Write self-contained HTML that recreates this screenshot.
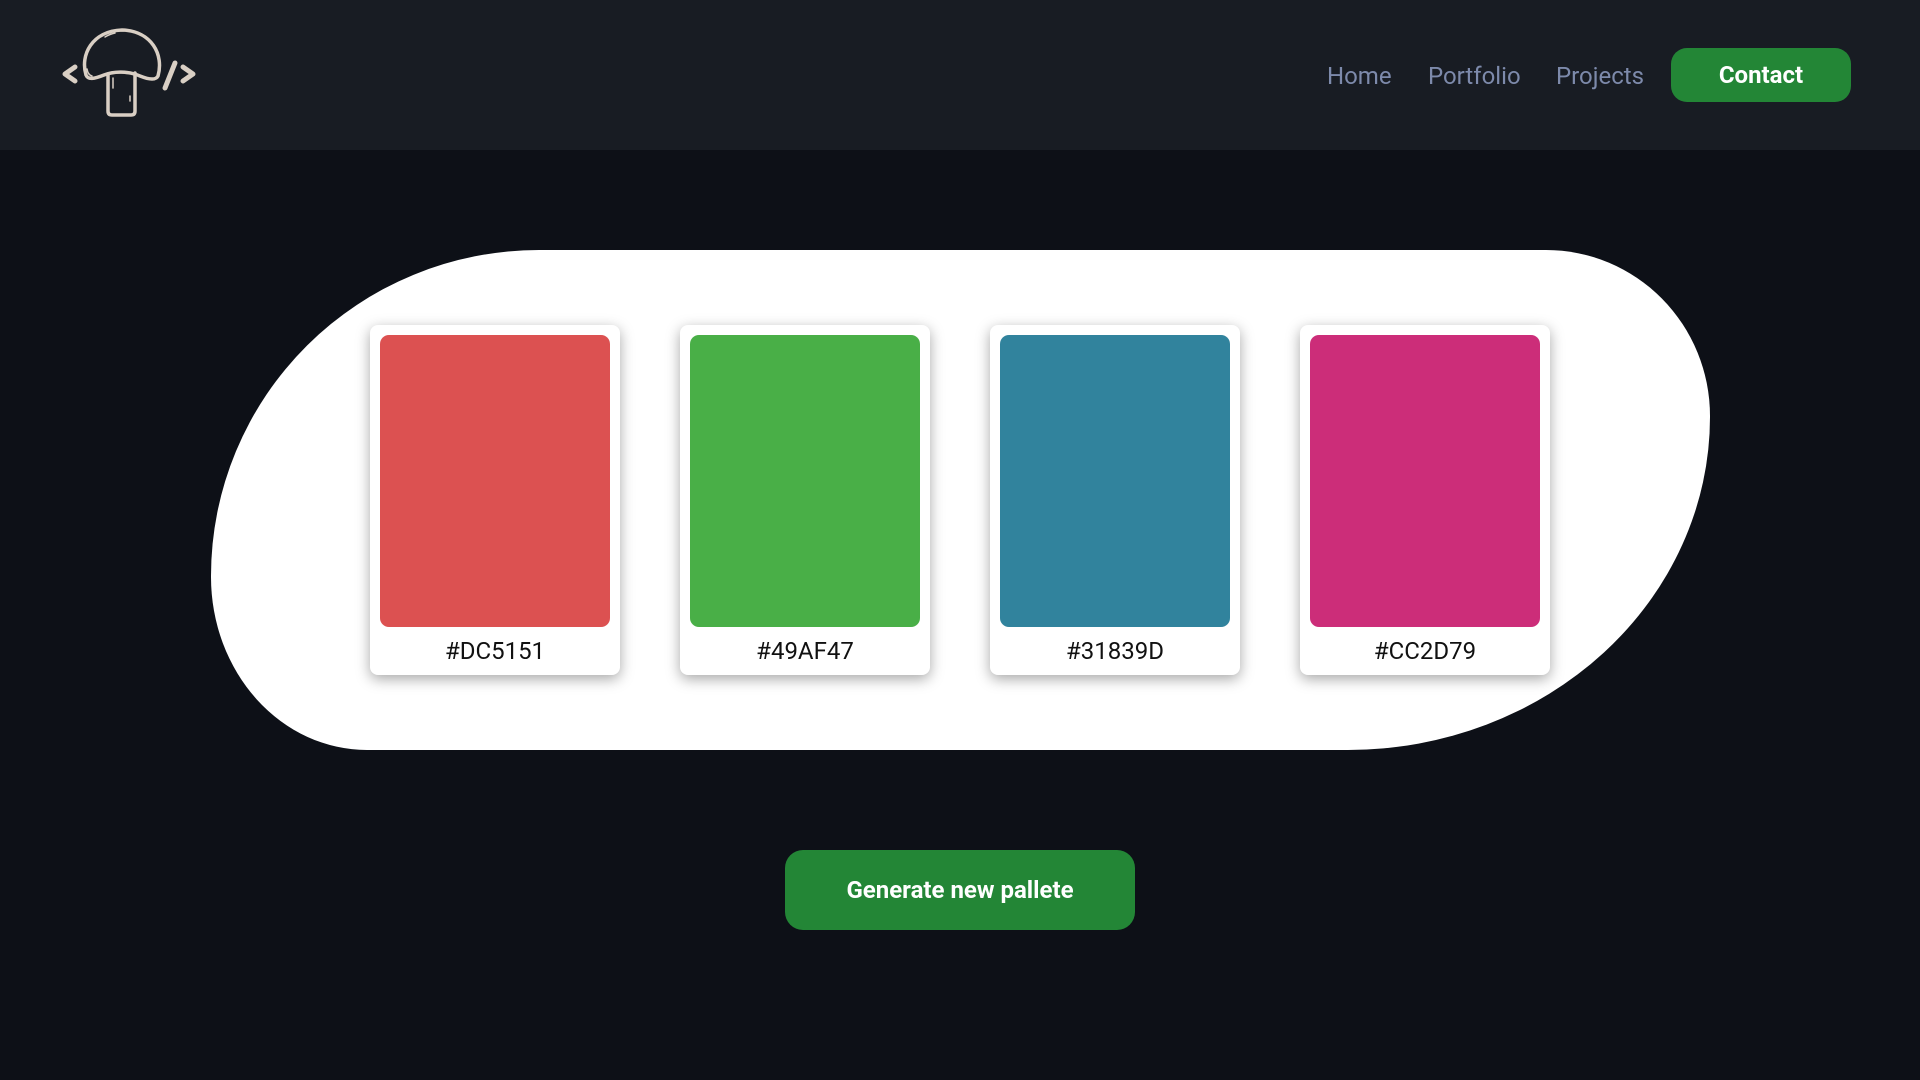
<!DOCTYPE html>
<html><head><meta charset="utf-8"><style>
*{margin:0;padding:0;box-sizing:border-box}
body{width:1920px;height:1080px;background:#0d1017;font-family:Roboto,"Liberation Sans",sans-serif;overflow:hidden;position:relative}
header{position:absolute;left:0;top:0;width:1920px;height:150px;background:#181c23}
.nav{position:absolute;top:62px;font-size:24px;color:#7d8aab}
.contact{position:absolute;left:1671px;top:48px;width:180px;height:54px;background:#238636;border-radius:16px;color:#fff;font-weight:bold;font-size:24px;line-height:54px;text-align:center}
.blob{position:absolute;left:211px;top:250px;width:1499px;height:500px;background:#fff;border-radius:328px 164px 362px 156px / 326px 166px 333px 173px}
.card{position:absolute;top:325px;width:250px;height:350px;background:#fff;border-radius:8px;box-shadow:0 4px 14px rgba(0,0,0,.35)}
.sw{position:absolute;left:10px;top:10px;width:230px;height:292px;border-radius:9px}
.lbl{position:absolute;left:0;top:312px;width:250px;text-align:center;font-size:24px;color:#111}
.gen{position:absolute;left:785px;top:850px;width:350px;height:80px;background:#238636;border-radius:18px;color:#fff;font-weight:bold;font-size:24px;line-height:80px;text-align:center}
</style></head><body>
<header>
<svg style="position:absolute;left:0;top:0" width="260" height="150" viewBox="0 0 260 150" fill="none" stroke="#d9cfc4" stroke-linecap="round" stroke-linejoin="round">
<path d="M75 67 L65 74 L75 81" stroke-width="5"/>
<path d="M183 67 L193 74 L183 81" stroke-width="5"/>
<path d="M175 63 L165 88" stroke-width="5"/>
<path d="M86 75 C80 55 92 31 122 30 C152 31 164 55 158 76 C156 80 150 80 140 76 C128 71 114 71 104 75 C94 79 88 80 86 75 Z" stroke-width="3.5"/>
<path d="M108 74 L108 111 Q108 115 112 115 L131 115 Q135 115 135 111 L135 73" stroke-width="3.5"/>
<path d="M105 37 Q110 34 115 33" stroke-width="1.5"/>
<path d="M113 78 L113 88 M130 96 L130 101 M87 69 Q88 75 92 76" stroke-width="1.5"/>
</svg>
<div class="nav" style="left:1327px">Home</div>
<div class="nav" style="left:1428px">Portfolio</div>
<div class="nav" style="left:1556px">Projects</div>
<div class="contact">Contact</div>
</header>
<div class="blob"></div>
<div class="card" style="left:370px"><div class="sw" style="background:#DC5151"></div><div class="lbl">#DC5151</div></div>
<div class="card" style="left:680px"><div class="sw" style="background:#49AF47"></div><div class="lbl">#49AF47</div></div>
<div class="card" style="left:990px"><div class="sw" style="background:#31839D"></div><div class="lbl">#31839D</div></div>
<div class="card" style="left:1300px"><div class="sw" style="background:#CC2D79"></div><div class="lbl">#CC2D79</div></div>
<div class="gen">Generate new pallete</div>
</body></html>
